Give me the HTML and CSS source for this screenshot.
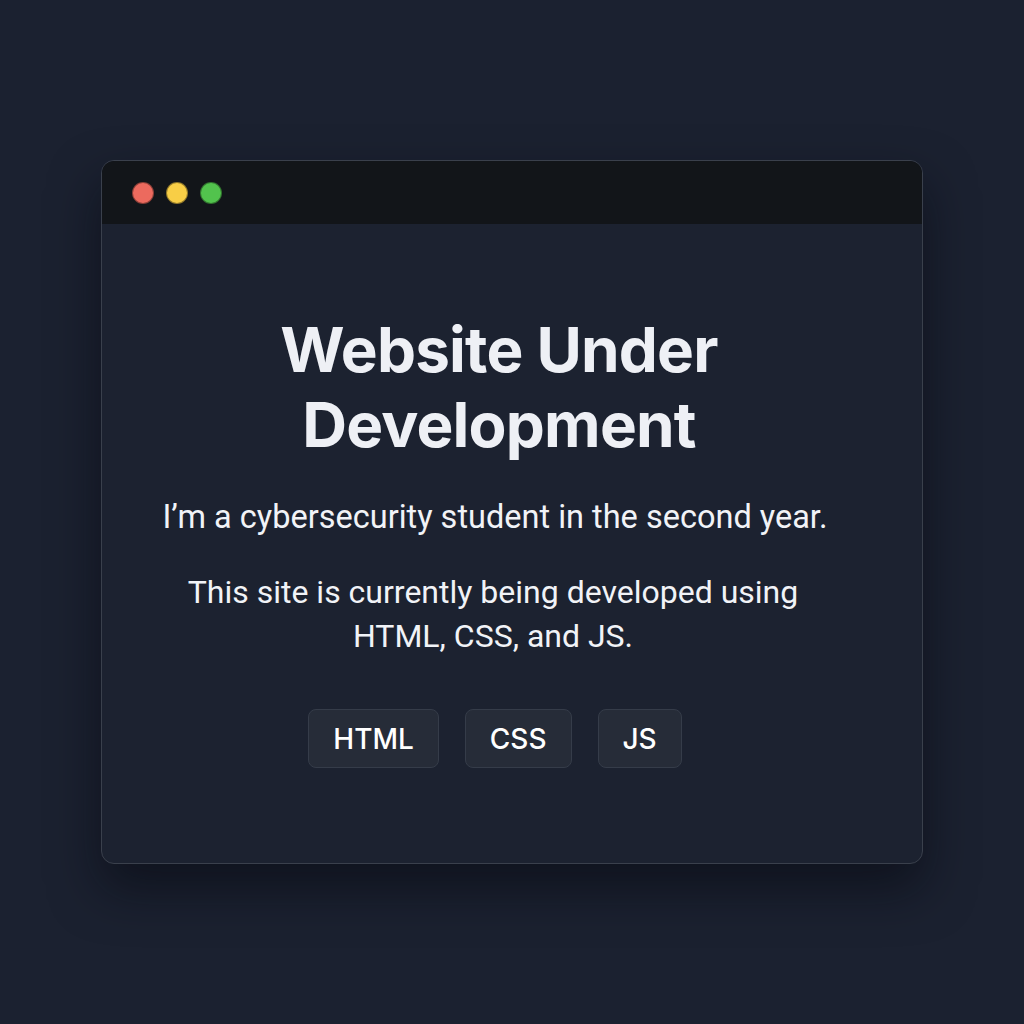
FILE: index.html
```html
<!DOCTYPE html>
<html lang="en">
<head>
<meta charset="utf-8">
<title>Website Under Development</title>
<link rel="stylesheet" href="styles.css">
</head>
<body>
<div class="window">
  <div class="titlebar">
    <span class="dot red"></span>
    <span class="dot yellow"></span>
    <span class="dot green"></span>
  </div>
  <main class="content">
    <h1 class="title">Website Under<br>Development</h1>
    <p class="lead">I’m a cybersecurity student in the second year.</p>
    <p class="desc">This site is currently being developed using<br>HTML, CSS, and JS.</p>
    <div class="badges">
      <span class="badge">HTML</span>
      <span class="badge">CSS</span>
      <span class="badge">JS</span>
    </div>
  </main>
</div>
</body>
</html>
```
FILE: styles.css
```css
html, body {
  margin: 0;
  padding: 0;
}
body {
  background: #1b2130;
  height: 100vh;
  display: flex;
  align-items: center;
  justify-content: center;
  font-family: Inter, "Noto Sans", sans-serif;
}
.window {
  width: 822px;
  height: 704px;
  box-sizing: border-box;
  background: #1c2230;
  border: 1px solid #3a404c;
  border-radius: 13px;
  overflow: hidden;
  display: flex;
  flex-direction: column;
  box-shadow: 0 24px 50px rgba(5, 8, 14, 0.55);
}
.titlebar {
  height: 63px;
  flex: none;
  background: #121519;
  display: flex;
  align-items: center;
  gap: 12px;
  padding-left: 30px;
}
.dot {
  width: 22px;
  height: 22px;
  border-radius: 50%;
  box-sizing: border-box;
  border: 1px solid rgba(0,0,0,0.4);
}
.red { background: #ec6a5e; }
.yellow { background: #f8ce46; }
.green { background: #52c34d; }
.content {
  flex: 1;
  display: flex;
  flex-direction: column;
  align-items: center;
  text-align: center;
  padding: 88px 26px 0 0;
  color: #f1f3f7;
}
.title {
  margin: 0;
  font-size: 62px;
  line-height: 75px;
  font-weight: 700;
  letter-spacing: -0.8px;
  color: #eef0f5;
}
.lead {
  margin: 33px 8px 0 0;
  font-family: Roboto, sans-serif;
  font-size: 32.5px;
  line-height: 44px;
}
.desc {
  margin: 31px 12px 0 0;
  font-family: Roboto, sans-serif;
  font-size: 32px;
  line-height: 44px;
}
.badges {
  display: flex;
  gap: 26px;
  margin: 51px 8px 0 0;
}
.badge {
  height: 59px;
  box-sizing: border-box;
  padding: 0 24px;
  display: flex;
  align-items: center;
  font-size: 28px;
  font-weight: 500;
  color: #ffffff;
  background: #262c38;
  border: 1px solid #353c49;
  border-radius: 8px;
}
```
